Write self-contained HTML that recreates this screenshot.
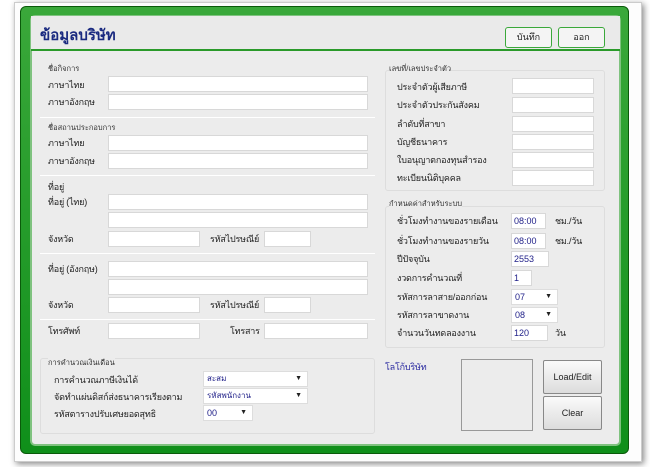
<!DOCTYPE html>
<html><head><meta charset="utf-8"><style>
*{box-sizing:border-box;margin:0;padding:0}
body{width:650px;height:467px;background:#fff;position:relative;overflow:hidden;font-family:"Liberation Sans","Noto Sans CJK SC",sans-serif;font-size:10px;color:#222}
.a{position:absolute}
.page{left:14px;top:2px;width:628px;height:460px;background:#fdfdfd;border:1px solid #ccc;box-shadow:2px 2px 6px #888}
.frame{left:20px;top:6px;width:609px;height:448px;background:linear-gradient(#3aa83a,#0f8f1a);border-radius:6px;border:1px solid #0a5a0a}
.inner{left:30px;top:15px;width:591px;height:431px;background:#ececec;border:2px solid #7fc27f;border-radius:5px}
.hdr{left:31px;top:16px;width:589px;height:35px;background:#eaeaea;border-bottom:2px solid #2a9a2a}
.t{font-size:15px;font-weight:bold;color:#1a2a80}
.in{background:#fff;border:1px solid #d8d8d8;height:16px}
.lb{font-size:9px;color:#222;letter-spacing:-0.2px}
.gl{font-size:7.5px;color:#333}
.sep{height:1px;background:#bbb;border-bottom:1px solid #fff}
.btn{border:1px solid #3aa83a;border-radius:3px;background:#f4f4f4;text-align:center;line-height:19px;font-size:9px}
.b2{border:1px solid #888;background:linear-gradient(#fafafa,#dcdcdc);text-align:center;font-size:9px;border-radius:2px}
.sel{background:#fff;border:1px solid #ddd;height:16px;font-size:8px;color:#22228a;padding-left:3px;line-height:14px}
.sel:after{content:"▼";position:absolute;right:5px;top:0;font-size:7px;color:#222}
.v{font-size:9px;color:#22228a;padding-left:2px;line-height:14px}
.box{border:1px solid #ddd;border-radius:3px}
</style></head><body>
<div class="a page"></div>
<div class="a frame"></div>
<div class="a inner"></div>
<div class="a hdr"></div>
<div class="a t" style="left:40px;top:23px">ข้อมูลบริษัท</div>
<div class="a btn" style="left:505px;top:27px;width:47px;height:21px">บันทึก</div>
<div class="a btn" style="left:558px;top:27px;width:47px;height:21px">ออก</div>

<div class="a gl" style="left:48px;top:63px">ชื่อกิจการ</div>
<div class="a lb" style="left:48px;top:78px">ภาษาไทย</div><div class="a in" style="left:108px;top:76px;width:260px"></div>
<div class="a lb" style="left:48px;top:95px">ภาษาอังกฤษ</div><div class="a in" style="left:108px;top:94px;width:260px"></div>
<div class="a sep" style="left:40px;top:117px;width:335px"></div>
<div class="a gl" style="left:48px;top:122px">ชื่อสถานประกอบการ</div>
<div class="a lb" style="left:48px;top:136px">ภาษาไทย</div><div class="a in" style="left:108px;top:135px;width:260px"></div>
<div class="a lb" style="left:48px;top:154px">ภาษาอังกฤษ</div><div class="a in" style="left:108px;top:153px;width:260px"></div>
<div class="a sep" style="left:40px;top:175px;width:335px"></div>
<div class="a lb" style="left:48px;top:180px">ที่อยู่</div>
<div class="a lb" style="left:48px;top:195px">ที่อยู่ (ไทย)</div><div class="a in" style="left:108px;top:194px;width:260px"></div>
<div class="a in" style="left:108px;top:212px;width:260px"></div>
<div class="a lb" style="left:48px;top:232px">จังหวัด</div><div class="a in" style="left:108px;top:231px;width:92px"></div>
<div class="a lb" style="left:210px;top:232px">รหัสไปรษณีย์</div><div class="a in" style="left:264px;top:231px;width:47px"></div>
<div class="a sep" style="left:40px;top:253px;width:335px"></div>
<div class="a lb" style="left:48px;top:262px">ที่อยู่ (อังกฤษ)</div><div class="a in" style="left:108px;top:261px;width:260px"></div>
<div class="a in" style="left:108px;top:279px;width:260px"></div>
<div class="a lb" style="left:48px;top:298px">จังหวัด</div><div class="a in" style="left:108px;top:297px;width:92px"></div>
<div class="a lb" style="left:210px;top:298px">รหัสไปรษณีย์</div><div class="a in" style="left:264px;top:297px;width:47px"></div>
<div class="a sep" style="left:40px;top:319px;width:335px"></div>
<div class="a lb" style="left:48px;top:324px">โทรศัพท์</div><div class="a in" style="left:108px;top:323px;width:92px"></div>
<div class="a lb" style="left:230px;top:324px">โทรสาร</div><div class="a in" style="left:264px;top:323px;width:104px"></div>

<div class="a box" style="left:40px;top:358px;width:335px;height:76px"></div>
<div class="a gl" style="left:48px;top:357px;background:#ececec">การคำนวณเงินเดือน</div>
<div class="a lb" style="left:54px;top:373px">การคำนวณภาษีเงินได้</div><div class="a sel" style="left:203px;top:371px;width:105px">สะสม</div>
<div class="a lb" style="left:54px;top:390px">จัดทำแผ่นดิสก์ส่งธนาคารเรียงตาม</div><div class="a sel" style="left:203px;top:388px;width:105px">รหัสพนักงาน</div>
<div class="a lb" style="left:54px;top:407px">รหัสตารางปรับเศษยอดสุทธิ</div><div class="a sel" style="left:203px;top:405px;width:50px;font-size:9px">00</div>

<div class="a box" style="left:385px;top:70px;width:220px;height:121px"></div>
<div class="a gl" style="left:389px;top:63px;background:#ececec">เลขที่/เลขประจำตัว</div>
<div class="a lb" style="left:397px;top:80px">ประจำตัวผู้เสียภาษี</div><div class="a in" style="left:512px;top:78px;width:82px"></div>
<div class="a lb" style="left:397px;top:98px">ประจำตัวประกันสังคม</div><div class="a in" style="left:512px;top:97px;width:82px"></div>
<div class="a lb" style="left:397px;top:117px">ลำดับที่สาขา</div><div class="a in" style="left:512px;top:116px;width:82px"></div>
<div class="a lb" style="left:397px;top:135px">บัญชีธนาคาร</div><div class="a in" style="left:512px;top:134px;width:82px"></div>
<div class="a lb" style="left:397px;top:153px">ใบอนุญาตกองทุนสำรอง</div><div class="a in" style="left:512px;top:152px;width:82px"></div>
<div class="a lb" style="left:397px;top:171px">ทะเบียนนิติบุคคล</div><div class="a in" style="left:512px;top:170px;width:82px"></div>

<div class="a box" style="left:385px;top:206px;width:220px;height:142px"></div>
<div class="a gl" style="left:389px;top:198px;background:#ececec">กำหนดค่าสำหรับระบบ</div>
<div class="a lb" style="left:397px;top:214px">ชั่วโมงทำงานของรายเดือน</div><div class="a in v" style="left:511px;top:213px;width:35px">08:00</div><div class="a lb" style="left:555px;top:214px">ชม./วัน</div>
<div class="a lb" style="left:397px;top:234px">ชั่วโมงทำงานของรายวัน</div><div class="a in v" style="left:511px;top:233px;width:35px">08:00</div><div class="a lb" style="left:555px;top:234px">ชม./วัน</div>
<div class="a lb" style="left:397px;top:252px">ปีปัจจุบัน</div><div class="a in v" style="left:511px;top:251px;width:38px">2553</div>
<div class="a lb" style="left:397px;top:271px">งวดการคำนวณที่</div><div class="a in v" style="left:511px;top:270px;width:21px">1</div>
<div class="a lb" style="left:397px;top:290px">รหัสการลาสาย/ออกก่อน</div><div class="a sel" style="left:511px;top:289px;width:47px;font-size:9px">07</div>
<div class="a lb" style="left:397px;top:308px">รหัสการลาขาดงาน</div><div class="a sel" style="left:511px;top:307px;width:47px;font-size:9px">08</div>
<div class="a lb" style="left:397px;top:326px">จำนวนวันทดลองงาน</div><div class="a in v" style="left:511px;top:325px;width:37px">120</div><div class="a lb" style="left:555px;top:326px">วัน</div>

<div class="a lb" style="left:385px;top:360px;color:#2a2aa0;font-size:9px">โลโก้บริษัท</div>
<div class="a" style="left:461px;top:359px;width:72px;height:72px;border:1px solid #999"></div>
<div class="a b2" style="left:543px;top:360px;width:59px;height:34px;line-height:32px">Load/Edit</div>
<div class="a b2" style="left:543px;top:396px;width:59px;height:34px;line-height:32px">Clear</div>
</body></html>
